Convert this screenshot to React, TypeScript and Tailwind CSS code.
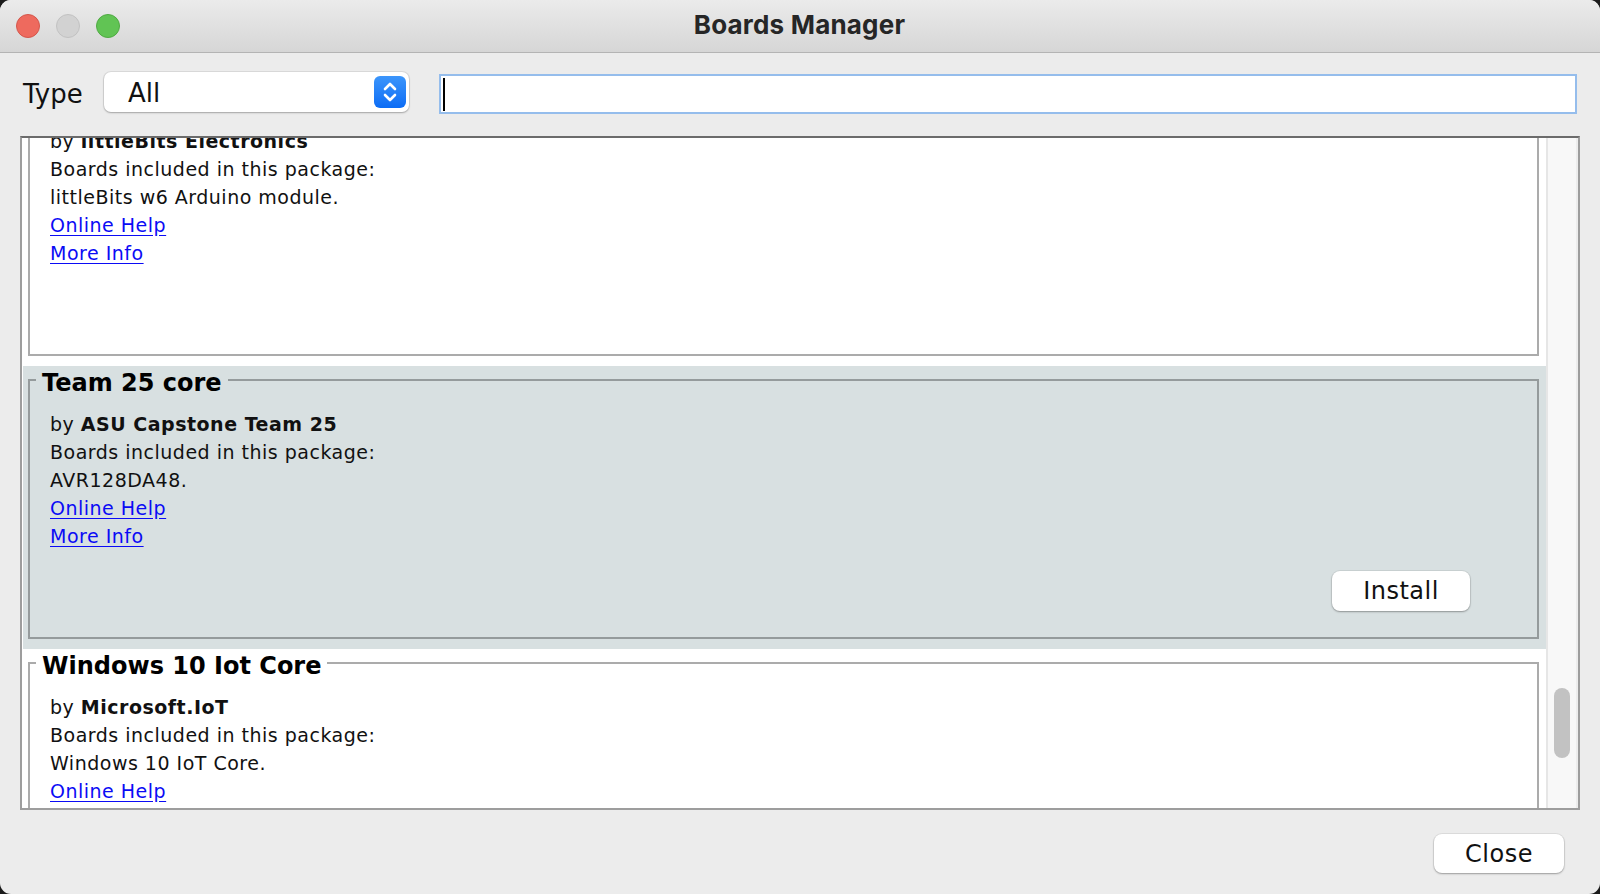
import React from 'react';

type Board = {
  name: string;
  author: string;
  boards: string;
  links: string[];
  selected?: boolean;
};

const packages: Board[] = [
  {
    name: 'littleBits Arduino AVR Boards',
    author: 'littleBits Electronics',
    boards: 'littleBits w6 Arduino module.',
    links: ['Online Help', 'More Info'],
  },
  {
    name: 'Team 25 core',
    author: 'ASU Capstone Team 25',
    boards: 'AVR128DA48.',
    links: ['Online Help', 'More Info'],
    selected: true,
  },
  {
    name: 'Windows 10 Iot Core',
    author: 'Microsoft.IoT',
    boards: 'Windows 10 IoT Core.',
    links: ['Online Help', 'More Info'],
  },
];

const bodyFont = { fontFamily: '"DejaVu Sans", "Liberation Sans", sans-serif' };

function PackageItem({ item, first }: { item: Board; first?: boolean }) {
  return (
    <div
      className={`ml-[1px] pl-[5px] pr-[7px] pb-[10px] ${item.selected ? 'bg-[#d8e0e1]' : 'bg-white'} ${first ? '-mt-[55px]' : ''}`}
    >
      <fieldset className={`border-2 ${item.selected ? 'border-[#959b9c]' : 'border-[#ababab]'}`}>
        <legend className="ml-[6px] px-[6px] pt-[6px] text-[24px] leading-[22px] font-bold text-black">
          {item.name}
        </legend>
        <div className="pl-[20px] pt-[16px] text-[19px] leading-[28px] tracking-[0.5px] text-[#111]">
          <div>
            by <span className="font-bold">{item.author}</span>
          </div>
          <div>Boards included in this package:</div>
          <div>{item.boards}</div>
          {item.links.map((l) => (
            <div key={l}>
              <a href="#" className="text-[#0b0bf5] underline underline-offset-[3px]">
                {l}
              </a>
            </div>
          ))}
        </div>
        <div className="flex justify-end pr-[67px] pt-[21px] pb-[26px]">
          {item.selected ? (
            <button className="w-[138px] h-[40px] rounded-[8px] bg-white text-[24px] tracking-[0.5px] text-[#111] shadow-[0_0_0_1px_rgba(0,0,0,0.06),0_1px_2px_rgba(0,0,0,0.3)]">
              Install
            </button>
          ) : (
            <div className="h-[40px]" />
          )}
        </div>
      </fieldset>
    </div>
  );
}

export default function App() {
  return (
    <div className="w-[1600px] h-[894px] bg-[#1b1b1b]" style={bodyFont}>
      <div className="w-full h-full bg-[#ececec] rounded-[11px] overflow-hidden flex flex-col">
        {/* title bar */}
        <div className="h-[53px] shrink-0 flex items-center border-b border-[#b4b4b4] bg-gradient-to-b from-[#ebebeb] to-[#d6d6d6]">
          <div className="flex gap-[16px] pl-[16px]">
            <span className="w-[24px] h-[24px] rounded-full bg-[#ee6a5e] border border-[#d4574c]" />
            <span className="w-[24px] h-[24px] rounded-full bg-[#d2d2d2] border border-[#c2c2c2]" />
            <span className="w-[24px] h-[24px] rounded-full bg-[#61c454] border border-[#50aa43]" />
          </div>
          <div
            className="flex-1 text-center -ml-[121px] mb-[3px] text-[26px] font-bold text-[#262626] tracking-[0.2px]"
            style={{ fontFamily: 'Inter, "Liberation Sans", sans-serif' }}
          >
            Boards Manager
          </div>
        </div>

        {/* filter row */}
        <div className="flex items-start pt-[19px] pl-[23px] pr-[23px]">
          <div className="h-[40px] flex items-center pt-[4px] text-[26px] text-[#111] w-[81px]">Type</div>
          <div className="w-[305px] h-[40px] rounded-[7px] bg-white flex items-center justify-between pl-[24px] pr-[3px] shadow-[0_0_0_1px_rgba(0,0,0,0.07),0_1px_2px_rgba(0,0,0,0.25)]">
            <span className="text-[26px] text-[#111] pt-[2px]">All</span>
            <span className="w-[32px] h-[32px] rounded-[6px] bg-gradient-to-b from-[#3b95fb] to-[#0a6cf5] flex items-center justify-center">
              <svg width="18" height="24" viewBox="0 0 18 24" fill="none" stroke="white" strokeWidth="2.6" strokeLinecap="round" strokeLinejoin="round">
                <path d="M4 9 L9 4 L14 9" />
                <path d="M4 15 L9 20 L14 15" />
              </svg>
            </span>
          </div>
          <div className="ml-[30px] mt-[2px] flex-1 h-[40px] bg-white border-2 border-[#95bdec] flex items-center pl-[2px]">
            <span className="w-[2px] h-[33px] bg-black" />
          </div>
        </div>

        {/* package list */}
        <div className="mx-[20px] mt-[22px] h-[674px] flex border-2 border-[#9d9d9d] border-t-[#6b6b6b] bg-white">
          <div className="flex-1 overflow-hidden">
            {packages.map((p, i) => (
              <PackageItem key={p.name} item={p} first={i === 0} />
            ))}
          </div>
          <div className="w-[32px] bg-[#f8f8f8] border-l-2 border-[#e6e6e6] border-r-2 border-r-[#ededed] pt-[550px] pl-[6px]">
            <div className="w-[16px] h-[70px] rounded-full bg-[#c2c2c2]" />
          </div>
        </div>

        {/* footer */}
        <div className="flex justify-end pt-[24px] pr-[36px]">
          <button className="w-[130px] h-[39px] rounded-[8px] bg-white text-[24px] tracking-[0.5px] text-[#111] shadow-[0_0_0_1px_rgba(0,0,0,0.06),0_1px_2px_rgba(0,0,0,0.3)]">
            Close
          </button>
        </div>
      </div>
    </div>
  );
}
